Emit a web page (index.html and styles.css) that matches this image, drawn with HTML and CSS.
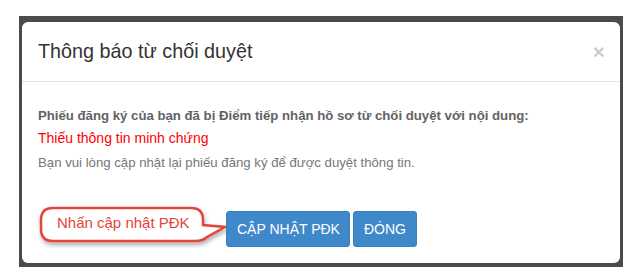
FILE: index.html
```html
<!DOCTYPE html>
<html lang="vi">
<head>
  <meta charset="UTF-8" />
  <title>Thông báo từ chối duyệt</title>
  <link rel="stylesheet" href="styles.css">
</head>
<body>

  <!-- nền tối phía sau hộp thoại -->
  <div class="backdrop">
    <div class="modal">
      <div class="modal-header">
        <h4 class="modal-title">Thông báo từ chối duyệt</h4>
        <span class="close">&times;</span>
      </div>

      <div class="modal-body">
        <p class="reason-label">Phiếu đăng ký của bạn đã bị Điểm tiếp nhận hồ sơ từ chối duyệt với nội dung:</p>
        <p class="reason">Thiếu thông tin minh chứng</p>
        <p class="hint">Bạn vui lòng cập nhật lại phiếu đăng ký để được duyệt thông tin.</p>
      </div>

      <div class="modal-footer">
        <!-- chú thích hướng dẫn -->
        <svg class="callout" width="190" height="44" viewBox="0 0 190 44">
          <defs>
            <filter id="shadow" x="-10%" y="-20%" width="120%" height="160%">
              <feDropShadow dx="1" dy="3" stdDeviation="2" flood-color="#000" flood-opacity="0.3" />
            </filter>
          </defs>
          <path d="M17,4 H155 Q167,4 167,16 V21 L189,23 L171,33 Q167,37 159,37 H17 Q5,37 5,25 V16 Q5,4 17,4 Z"
                fill="#fff" stroke="#e2453b" stroke-width="2.5" filter="url(#shadow)" />
          <text x="21" y="24" class="callout-text">Nhấn cập nhật PĐK</text>
        </svg>
        <button class="btn btn-update">Cập nhật PĐK</button>
        <button class="btn">Đóng</button>
      </div>
    </div>
  </div>

</body>
</html>
```

FILE: styles.css
```css
/* ======= cơ bản ======= */
* {
  box-sizing: border-box;
  margin: 0;
  padding: 0;
}
body {
  font-family: "Liberation Sans", Arial, sans-serif;
  background: #fff;
  color: #333;
}

/* ======= nền tối ======= */
.backdrop {
  margin: 16px 0 0 19px;
  width: 604px;
  height: 251px;
  padding: 6px 3px 4px 3px;
  background: #4b4b4b;
}

/* ======= hộp thoại ======= */
.modal {
  height: 241px;
  background: #fff;
  border-radius: 6px;
}
.modal-header {
  display: flex;
  align-items: center;
  justify-content: space-between;
  padding: 15px 16px 15px 16px;
  border-bottom: 1px solid #e5e5e5;
}
.modal-title {
  font-size: 19.8px;
  font-weight: normal;
  line-height: 29px;
  color: #333;
}
.close {
  font-size: 21px;
  font-weight: bold;
  line-height: 1;
  color: #000;
  opacity: 0.2;
  margin-right: -1px;
}

.modal-body {
  padding: 24px 16px 0 16px;
  font-size: 13.2px;
  line-height: 20px;
  color: #666;
}
.reason-label {
  font-weight: bold;
  color: #5f6368;
}
.reason {
  margin-top: 2px;
  font-size: 14px;
  color: #ff0000;
}
.hint {
  margin-top: 5px;
  color: #777;
}

/* ======= chân hộp thoại ======= */
.modal-footer {
  display: flex;
  align-items: flex-start;
  gap: 3px;
  padding: 0 14px;
  margin-top: 38px;
}
.callout {
  margin-top: -7px;
  margin-right: -3px;
}
.callout-text {
  font-family: "Liberation Sans", Arial, sans-serif;
  font-size: 15px;
  fill: #e2453b;
}
.btn {
  height: 36px;
  padding: 0 10px;
  background: #3f88ca;
  border: 1px solid #3a80bf;
  border-radius: 3px;
  color: #fff;
  font-family: "Liberation Sans", Arial, sans-serif;
  font-size: 14px;
  text-transform: uppercase;
  white-space: nowrap;
  cursor: pointer;
}
.btn-update {
  width: 124px;
}
```
